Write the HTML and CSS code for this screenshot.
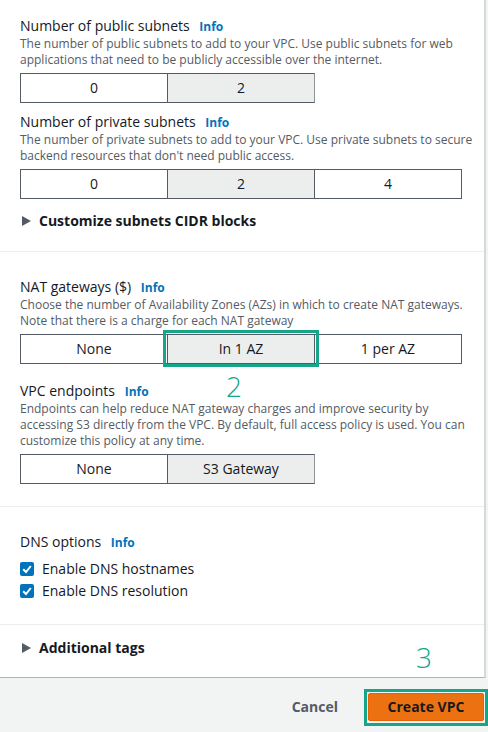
FILE: index.html
```html
<!DOCTYPE html>
<html lang="en">
<head>
<meta charset="utf-8">
<link rel="stylesheet" href="styles.css">
</head>
<body>
<div class="page">
  <div class="panel">
    <div class="section s1">
      <div class="field">
        <div class="label">Number of public subnets <span class="info">Info</span></div>
        <div class="desc">The number of public subnets to add to your VPC. Use public subnets for web<br>applications that need to be publicly accessible over the internet.</div>
        <div class="seg">
          <div class="opt">0</div>
          <div class="opt sel">2</div>
        </div>
      </div>
      <div class="field f2">
        <div class="label">Number of private subnets <span class="info">Info</span></div>
        <div class="desc">The number of private subnets to add to your VPC. Use private subnets to secure<br>backend resources that don't need public access.</div>
        <div class="seg">
          <div class="opt">0</div>
          <div class="opt sel">2</div>
          <div class="opt">4</div>
        </div>
      </div>
      <div class="expander"><span class="tri"></span>Customize subnets CIDR blocks</div>
    </div>
    <div class="section s2">
      <div class="field">
        <div class="label">NAT gateways ($) <span class="info">Info</span></div>
        <div class="desc">Choose the number of Availability Zones (AZs) in which to create NAT gateways.<br>Note that there is a charge for each NAT gateway</div>
        <div class="seg">
          <div class="opt">None</div>
          <div class="opt sel">In 1 AZ</div>
          <div class="opt">1 per AZ</div>
        </div>
      </div>
      <div class="field f3">
        <div class="label">VPC endpoints <span class="info">Info</span></div>
        <div class="desc">Endpoints can help reduce NAT gateway charges and improve security by<br>accessing S3 directly from the VPC. By default, full access policy is used. You can<br>customize this policy at any time.</div>
        <div class="seg">
          <div class="opt">None</div>
          <div class="opt sel">S3 Gateway</div>
        </div>
      </div>
    </div>
    <div class="section s3">
      <div class="label">DNS options <span class="info">Info</span></div>
      <div class="checks">
        <div class="check"><span class="box"><svg viewBox="0 0 14 14" width="14" height="14"><path d="M3.2 7.2 L6 10 L10.8 4" fill="none" stroke="#fff" stroke-width="2"/></svg></span>Enable DNS hostnames</div>
        <div class="check"><span class="box"><svg viewBox="0 0 14 14" width="14" height="14"><path d="M3.2 7.2 L6 10 L10.8 4" fill="none" stroke="#fff" stroke-width="2"/></svg></span>Enable DNS resolution</div>
      </div>
    </div>
    <div class="section s4">
      <div class="expander"><span class="tri"></span>Additional tags</div>
    </div>
  </div>
  <div class="footer">
    <span class="cancel">Cancel</span>
    <span class="create">Create VPC</span>
  </div>
  <div class="mark m1"></div>
  <div class="num n2">2</div>
  <div class="mark m2"></div>
  <div class="num n3">3</div>
</div>
</body>
</html>
```
FILE: styles.css
```css
* { box-sizing: border-box; }
html, body { margin: 0; padding: 0; }
body {
  width: 488px;
  height: 732px;
  overflow: hidden;
  background: #f2f3f3;
  font-family: "Open Sans", "Noto Sans", sans-serif;
  color: #16191f;
}
.page { position: relative; width: 488px; height: 732px; }
.panel {
  width: 486px;
  background: #fff;
  border-right: 2px solid #d5d9da;
  border-bottom: 1px solid #aab7b8;
}
.section { padding-left: 20px; padding-right: 8px; }
.section + .section { border-top: 1px solid #eaeded; }
.s1 { padding-top: 16px; padding-bottom: 20px; }
.s2 { padding-top: 25px; padding-bottom: 22px; }
.s3 { padding-top: 25px; padding-bottom: 23px; }
.s4 { padding-top: 13px; padding-bottom: 19px; }
.label {
  display: flex;
  align-items: baseline;
  height: 20px;
  font-size: 14px;
  line-height: 20px;
  white-space: pre;
}
.info { font-size: 12px; line-height: 20px; font-weight: 700; color: #0073bb; margin-left: 6px; }
.desc { font-size: 12px; line-height: 16px; color: #545b64; white-space: nowrap; }
.seg { display: flex; margin-top: 5px; }
.opt {
  width: 148px;
  height: 30px;
  border: 1px solid #545b64;
  display: flex;
  align-items: center;
  justify-content: center;
  font-size: 14px;
  line-height: 20px;
  background: #fff;
}
.opt + .opt { margin-left: -1px; }
.opt.sel { background: #eceeee; border-right-color: #8d9596; }
.field.f2 { margin-top: 9px; }
.field.f3 { margin-top: 17px; }
.expander {
  margin-top: 12px;
  height: 20px;
  font-size: 14px;
  line-height: 20px;
  font-weight: 700;
  display: flex;
  align-items: center;
}
.s4 .expander { margin-top: 0; }
.tri {
  width: 0; height: 0;
  border-left: 9px solid #545b64;
  border-top: 5.5px solid transparent;
  border-bottom: 5.5px solid transparent;
  margin-left: 2px;
  margin-right: 8px;
}
.checks { margin-top: 7px; display: flex; flex-direction: column; gap: 2px; }
.check { display: flex; align-items: center; height: 20px; font-size: 14px; line-height: 20px; }
.box {
  width: 14px; height: 14px;
  background: #0073bb;
  border-radius: 2px;
  margin-right: 8px;
  display: flex;
}
.footer {
  height: 54px;
  padding-top: 3px;
  display: flex;
  align-items: center;
  justify-content: flex-end;
  padding-right: 4px;
  gap: 30px;
}
.cancel { font-size: 14px; font-weight: 700; color: #545b64; }
.create {
  width: 116px;
  height: 28px;
  background: #ec7211;
  border: 1px solid #eb5f07;
  border-radius: 2px;
  display: flex;
  align-items: center;
  justify-content: center;
  font-size: 14px;
  font-weight: 700;
  color: #16191f;
}
.mark { position: absolute; border: 3px solid #16a589; }
.m1 { left: 163px; top: 330px; width: 156px; height: 37px; }
.m2 { left: 364px; top: 689px; width: 124px; height: 37px; }
.num { position: absolute; color: #16a589; font-family: "Open Sans", sans-serif; font-weight: 300; font-size: 28px; line-height: 22px; }
.n2 { left: 226px; top: 375px; }
.n3 { left: 416px; top: 646px; }
```
